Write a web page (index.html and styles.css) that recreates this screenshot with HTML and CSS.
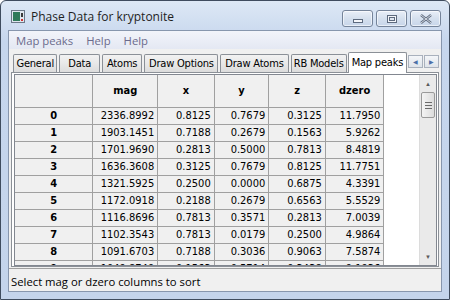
FILE: index.html
```html
<!DOCTYPE html>
<html lang="en">
<head>
  <meta charset="UTF-8">
  <title>Phase Data for kryptonite</title>
  <link rel="stylesheet" href="styles.css">
</head>
<body>
  <div class="window">
    <div class="titlebar">
      <span class="app_icon">
        <svg width="14" height="13" viewBox="0 0 14 13">
          <rect x="0.5" y="0.5" width="13" height="12" fill="#dfe6ee" stroke="#6c7888"/>
          <rect x="2" y="2" width="7" height="9" fill="#2f7a5a"/>
          <rect x="10" y="3" width="2" height="4" fill="#3a3a3a"/>
          <rect x="10" y="9" width="2" height="2" fill="#d03030"/>
        </svg>
      </span>
      <span class="title">Phase Data for kryptonite</span>
      <div class="win_buttons">
        <div class="win_btn"><span class="min_glyph"></span></div>
        <div class="win_btn"><span class="max_glyph"></span></div>
        <div class="win_btn close">
          <svg width="14" height="10" viewBox="0 0 14 10">
            <path d="M2 1 L12 9 M12 1 L2 9" stroke="#5d6a7e" stroke-width="2.4" fill="none"/>
            <path d="M2 1 L12 9 M12 1 L2 9" stroke="#f4f6fa" stroke-width="0.8" fill="none"/>
          </svg>
        </div>
      </div>
    </div>
    <div class="client">
      <div class="menubar">
        <span>Map peaks</span>
        <span>Help</span>
        <span>Help</span>
      </div>
      <div class="tab_area">
        <div class="tab_row">
          <div class="tab t_general">General</div>
          <div class="tab t_data">Data</div>
          <div class="tab t_atoms">Atoms</div>
          <div class="tab t_drawopt">Draw Options</div>
          <div class="tab t_drawatoms">Draw Atoms</div>
          <div class="tab t_rb">RB Models</div>
          <div class="tab t_map active">Map peaks</div>
          <div class="tab_arrows">
            <div class="arrow_btn">&#9664;</div>
            <div class="arrow_btn">&#9654;</div>
          </div>
        </div>
        <div class="tab_panel">
          <div class="grid_wrap">
            <div class="grid_clip">
              <table class="grid">
                <thead>
                  <tr><th class="rowhead"></th><th>mag</th><th>x</th><th>y</th><th>z</th><th>dzero</th><th class="fill"></th></tr>
                </thead>
                <tbody>
                  <tr><th>0</th><td>2336.8992</td><td>0.8125</td><td>0.7679</td><td>0.3125</td><td>11.7950</td><td class="fill"></td></tr>
                  <tr><th>1</th><td>1903.1451</td><td>0.7188</td><td>0.2679</td><td>0.1563</td><td>5.9262</td><td class="fill"></td></tr>
                  <tr><th>2</th><td>1701.9690</td><td>0.2813</td><td>0.5000</td><td>0.7813</td><td>8.4819</td><td class="fill"></td></tr>
                  <tr><th>3</th><td>1636.3608</td><td>0.3125</td><td>0.7679</td><td>0.8125</td><td>11.7751</td><td class="fill"></td></tr>
                  <tr><th>4</th><td>1321.5925</td><td>0.2500</td><td>0.0000</td><td>0.6875</td><td>4.3391</td><td class="fill"></td></tr>
                  <tr><th>5</th><td>1172.0918</td><td>0.2188</td><td>0.2679</td><td>0.6563</td><td>5.5529</td><td class="fill"></td></tr>
                  <tr><th>6</th><td>1116.8696</td><td>0.7813</td><td>0.3571</td><td>0.2813</td><td>7.0039</td><td class="fill"></td></tr>
                  <tr><th>7</th><td>1102.3543</td><td>0.7813</td><td>0.0179</td><td>0.2500</td><td>4.9864</td><td class="fill"></td></tr>
                  <tr><th>8</th><td>1091.6703</td><td>0.7188</td><td>0.3036</td><td>0.9063</td><td>7.5874</td><td class="fill"></td></tr>
                  <tr><th>9</th><td>1049.8749</td><td>0.1563</td><td>0.5714</td><td>0.3438</td><td>9.1936</td><td class="fill"></td></tr>
                </tbody>
              </table>
            </div>
            <div class="vscroll">
              <div class="sb_btn">&#9650;</div>
              <div class="sb_thumb"><span></span><span></span><span></span></div>
              <div class="sb_track"></div>
              <div class="sb_btn">&#9660;</div>
            </div>
          </div>
        </div>
      </div>
      <div class="statusbar">Select mag or dzero columns to sort</div>
    </div>
  </div>
</body>
</html>
```

FILE: styles.css
```css
* {
  box-sizing: border-box;
}
body {
  margin: 0;
  width: 450px;
  height: 300px;
  overflow: hidden;
  background: #ffffff;
}
.window {
  width: 450px;
  height: 300px;
  border: 1px solid #3f4c5e;
  border-radius: 6px 6px 0 0;
  background: linear-gradient(#dde8f5, #c6d6ed 40px, #c4d4eb);
  display: flex;
  flex-direction: column;
  overflow: hidden;
}
.titlebar {
  height: 29px;
  display: flex;
  align-items: center;
  padding: 0 8px 0 10px;
  flex-shrink: 0;
}
.app_icon {
  width: 14px;
  height: 13px;
  display: flex;
  margin-top: 2px;
}
.title {
  font-family: "Open Sans", "Noto Sans", sans-serif;
  font-size: 12px;
  color: #1e1e1e;
  margin-left: 6px;
  margin-top: 1px;
}
.win_buttons {
  margin-left: auto;
  display: flex;
  gap: 3px;
  align-self: flex-start;
  margin-top: 9px;
}
.win_btn {
  width: 31px;
  height: 17px;
  border: 1px solid #75849a;
  border-radius: 3px;
  background: linear-gradient(#e9eff8, #d5e0ee 50%, #c8d6ea);
  box-shadow: inset 0 0 0 1px rgba(255, 255, 255, 0.6);
  display: flex;
  align-items: center;
  justify-content: center;
}
.min_glyph {
  width: 10px;
  height: 4px;
  border: 1px solid #5d6a7e;
  background: #f4f6fa;
  margin-top: 4px;
}
.max_glyph {
  width: 10px;
  height: 8px;
  border: 1px solid #5d6a7e;
  background: #dde5f0;
  box-shadow: inset 0 0 0 1px #f4f6fa, inset 0 0 0 2px #5d6a7e;
}
.client {
  flex: 1;
  margin: 0 7px 7px 7px;
  display: flex;
  flex-direction: column;
  background: #f0f0f0;
  border: 1px solid #8796ad;
  min-height: 0;
}
.menubar {
  height: 18px;
  display: flex;
  align-items: center;
  gap: 13px;
  padding-left: 7px;
  background: linear-gradient(#f2f4fa, #e4e8f3);
  font-family: "Open Sans", "Noto Sans", sans-serif;
  font-size: 11.3px;
  color: #6b6b8c;
  flex-shrink: 0;
}
.tab_area {
  flex: 1;
  display: flex;
  flex-direction: column;
  padding: 2px 2px 0 2px;
  min-height: 0;
}
.tab_row {
  height: 21px;
  display: flex;
  align-items: flex-end;
  padding-left: 2px;
  flex-shrink: 0;
  position: relative;
  z-index: 1;
}
.tab {
  height: 18px;
  margin-right: 2px;
  border: 1px solid #8b9097;
  border-bottom: none;
  border-radius: 2px 2px 0 0;
  background: linear-gradient(#f2f2f2, #e8e8e8 50%, #dcdcdc);
  font-family: "DejaVu Sans Condensed", "Liberation Sans", sans-serif;
  font-size: 11px;
  letter-spacing: -0.2px;
  color: #000000;
  display: flex;
  align-items: center;
  justify-content: center;
  white-space: nowrap;
}
.t_general { width: 45px; }
.t_data { width: 41px; }
.t_atoms { width: 41px; }
.t_drawopt { width: 75px; }
.t_drawatoms { width: 69px; }
.t_rb { width: 57px; }
.t_map { width: 60px; }
.tab.active {
  height: 21px;
  background: #ffffff;
  margin-bottom: -1px;
  padding-bottom: 2px;
  margin-left: -1px;
  margin-right: 1px;
}
.tab_arrows {
  display: flex;
  gap: 1px;
  align-self: center;
  margin-left: 0;
}
.arrow_btn {
  width: 15px;
  height: 13px;
  border: 1px solid #a9b1bd;
  background: linear-gradient(#f4f6f9, #dfe4ea);
  font-size: 6px;
  color: #4c6fa8;
  display: flex;
  align-items: center;
  justify-content: center;
}
.tab_panel {
  flex: 1;
  border: 1px solid #8b9097;
  background: #ffffff;
  padding: 1px 1px 0 2px;
  min-height: 0;
  display: flex;
}
.grid_wrap {
  flex: 1;
  display: flex;
  border: 1px solid #828790;
  min-height: 0;
}
.grid_clip {
  flex: 1;
  overflow: hidden;
  background: #ffffff;
}
.grid {
  border-collapse: collapse;
  font-family: "DejaVu Sans Condensed", "Liberation Sans", sans-serif;
  font-size: 11px;
  color: #000000;
  table-layout: fixed;
}
.grid th,
.grid td {
  border: 1px solid #a0a0a0;
  background: #f0f0f0;
  height: 17px;
  padding: 0 3px;
  white-space: nowrap;
}
.grid td {
  text-align: right;
}
.grid th {
  font-weight: bold;
  text-align: center;
}
.grid thead th {
  height: 32px;
  border-top: none;
}
.grid tr > :first-child {
  border-left: none;
  width: 80px;
}
.grid tr > :nth-child(2) { width: 65px; }
.grid tr > :nth-child(3) { width: 57px; }
.grid tr > :nth-child(4) { width: 55px; }
.grid tr > :nth-child(5) { width: 57px; }
.grid tr > :nth-child(6) { width: 59px; }
.grid .fill {
  width: 36px;
  background: #ffffff;
  border: none;
}
.vscroll {
  width: 17px;
  display: flex;
  flex-direction: column;
  background: #eaeaea;
  border-left: 1px solid #dcdcdc;
  flex-shrink: 0;
}
.sb_btn {
  height: 17px;
  font-size: 6px;
  color: #5a5a5a;
  display: flex;
  align-items: center;
  justify-content: center;
}
.sb_thumb {
  height: 26px;
  margin: 0 1px;
  border: 1px solid #9a9a9a;
  border-radius: 2px;
  background: linear-gradient(90deg, #f4f4f4, #dcdcdc);
  display: flex;
  flex-direction: column;
  align-items: center;
  justify-content: center;
  gap: 2px;
}
.sb_thumb span {
  width: 7px;
  height: 1px;
  background: #6a6a6a;
}
.sb_track {
  flex: 1;
}
.statusbar {
  height: 23px;
  flex-shrink: 0;
  display: flex;
  align-items: center;
  padding-left: 2px;
  padding-top: 2px;
  border-top: 1px solid #a0a0a0;
  margin-top: 1px;
  font-family: "Open Sans", "Noto Sans", sans-serif;
  font-size: 11.3px;
  color: #000000;
  background: #f0f0f0;
}
```
